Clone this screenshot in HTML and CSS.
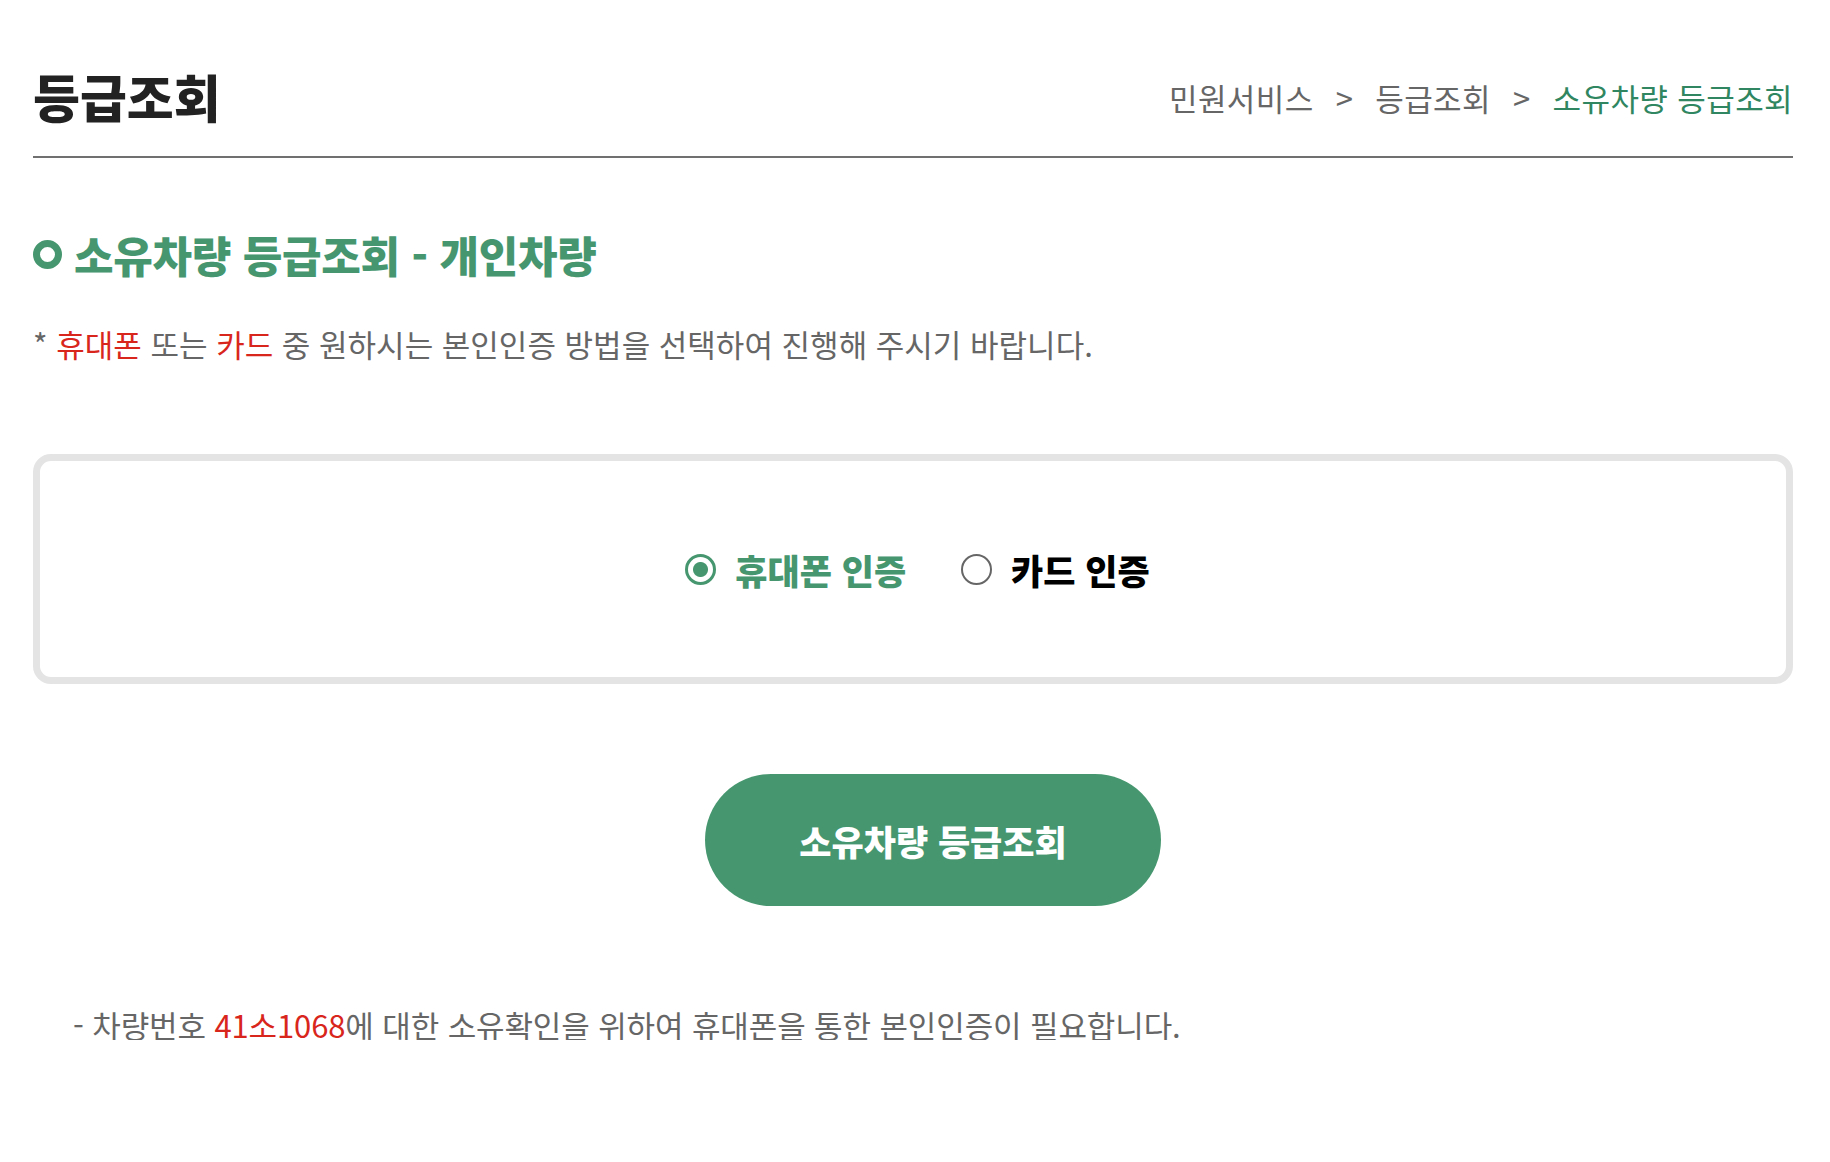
FILE: index.html
```html
<!DOCTYPE html>
<html lang="ko">
<head>
<meta charset="utf-8">
<title>등급조회</title>
<link rel="stylesheet" href="styles.css">
</head>
<body>
<div class="wrap">
  <div class="page-head">
    <h2 class="page-title">등급조회</h2>
    <ol class="breadcrumb">
      <li>민원서비스</li>
      <li class="sep">&gt;</li>
      <li>등급조회</li>
      <li class="sep">&gt;</li>
      <li class="current">소유차량 등급조회</li>
    </ol>
  </div>

  <h3 class="sec-title"><span class="bullet"></span>소유차량 등급조회 - 개인차량</h3>
  <p class="guide">* <em>휴대폰</em> 또는 <em>카드</em> 중 원하시는 본인인증 방법을 선택하여 진행해 주시기 바랍니다.</p>

  <div class="auth-box">
    <label class="radio checked"><input type="radio" name="auth" checked><span>휴대폰 인증</span></label>
    <label class="radio"><input type="radio" name="auth"><span>카드 인증</span></label>
  </div>

  <div class="btn-row">
    <button class="btn" type="button">소유차량 등급조회</button>
  </div>

  <p class="note">- 차량번호 <em>41소1068</em>에 대한 소유확인을 위하여 휴대폰을 통한 본인인증이 필요합니다.</p>
</div>
</body>
</html>
```

FILE: styles.css
```css
* { box-sizing: border-box; }
html, body { margin: 0; padding: 0; background: #fff; }
body {
  font-family: "Noto Sans CJK KR", "Noto Sans", sans-serif;
  color: #666;
}
.wrap {
  width: 1760px;
  margin-left: 33px;
}
.page-head {
  display: flex;
  justify-content: space-between;
  align-items: flex-end;
  padding-top: 71px;
  padding-bottom: 34px;
  border-bottom: 2px solid #707070;
}
.page-title {
  margin: 0;
  font-size: 51px;
  line-height: 51px;
  font-weight: 900;
  color: #222;
  letter-spacing: 0;
}
.breadcrumb {
  list-style: none;
  margin: 0 0 9px;
  padding: 0;
  display: flex;
  font-size: 31px;
  line-height: 31px;
  color: #666;
  letter-spacing: 0.4px;
}
.breadcrumb .sep { margin: 0 22px; }
.breadcrumb .current { color: #2f8660; }

.sec-title {
  margin: 75px 0 0;
  display: flex;
  align-items: center;
  gap: 12px;
  font-size: 43px;
  line-height: 43px;
  font-weight: 900;
  color: #46976f;
  letter-spacing: -0.3px;
}
.bullet {
  width: 29px;
  height: 29px;
  border: 7px solid #46976f;
  border-radius: 50%;
  flex: none;
}
.guide {
  margin: 52px 0 0;
  font-size: 31px;
  line-height: 31px;
  letter-spacing: 0;
  color: #666;
}
.guide em, .note em { font-style: normal; color: #d9261c; }

.auth-box {
  margin-top: 95px;
  height: 230px;
  border: 7px solid #e4e4e4;
  border-radius: 18px;
  display: flex;
  justify-content: center;
  align-items: center;
  gap: 55px;
  padding-left: 9px;
}
.radio {
  display: flex;
  align-items: center;
  gap: 19px;
  font-size: 35px;
  line-height: 35px;
  font-weight: 900;
  color: #000;
  letter-spacing: 0;
}
.radio.checked { color: #46976f; }
.radio input {
  appearance: none;
  -webkit-appearance: none;
  margin: 0;
  width: 31px;
  height: 31px;
  border: 2px solid #666;
  border-radius: 50%;
  background: #fff;
}
.radio input:checked {
  border: 3px solid #46976f;
  background: radial-gradient(circle, #46976f 0 7px, #fff 8px);
}

.btn-row {
  display: flex;
  justify-content: center;
  margin-top: 90px;
  padding-left: 40px;
}
.btn {
  width: 456px;
  height: 132px;
  border: 0;
  border-radius: 66px;
  background: #46976f;
  color: #fff;
  font-family: inherit;
  font-size: 35px;
  font-weight: 900;
  letter-spacing: 0;
}
.note {
  margin: 103px 0 0;
  padding-left: 40px;
  font-size: 31px;
  line-height: 31px;
  letter-spacing: -0.12px;
  color: #666;
}
```
